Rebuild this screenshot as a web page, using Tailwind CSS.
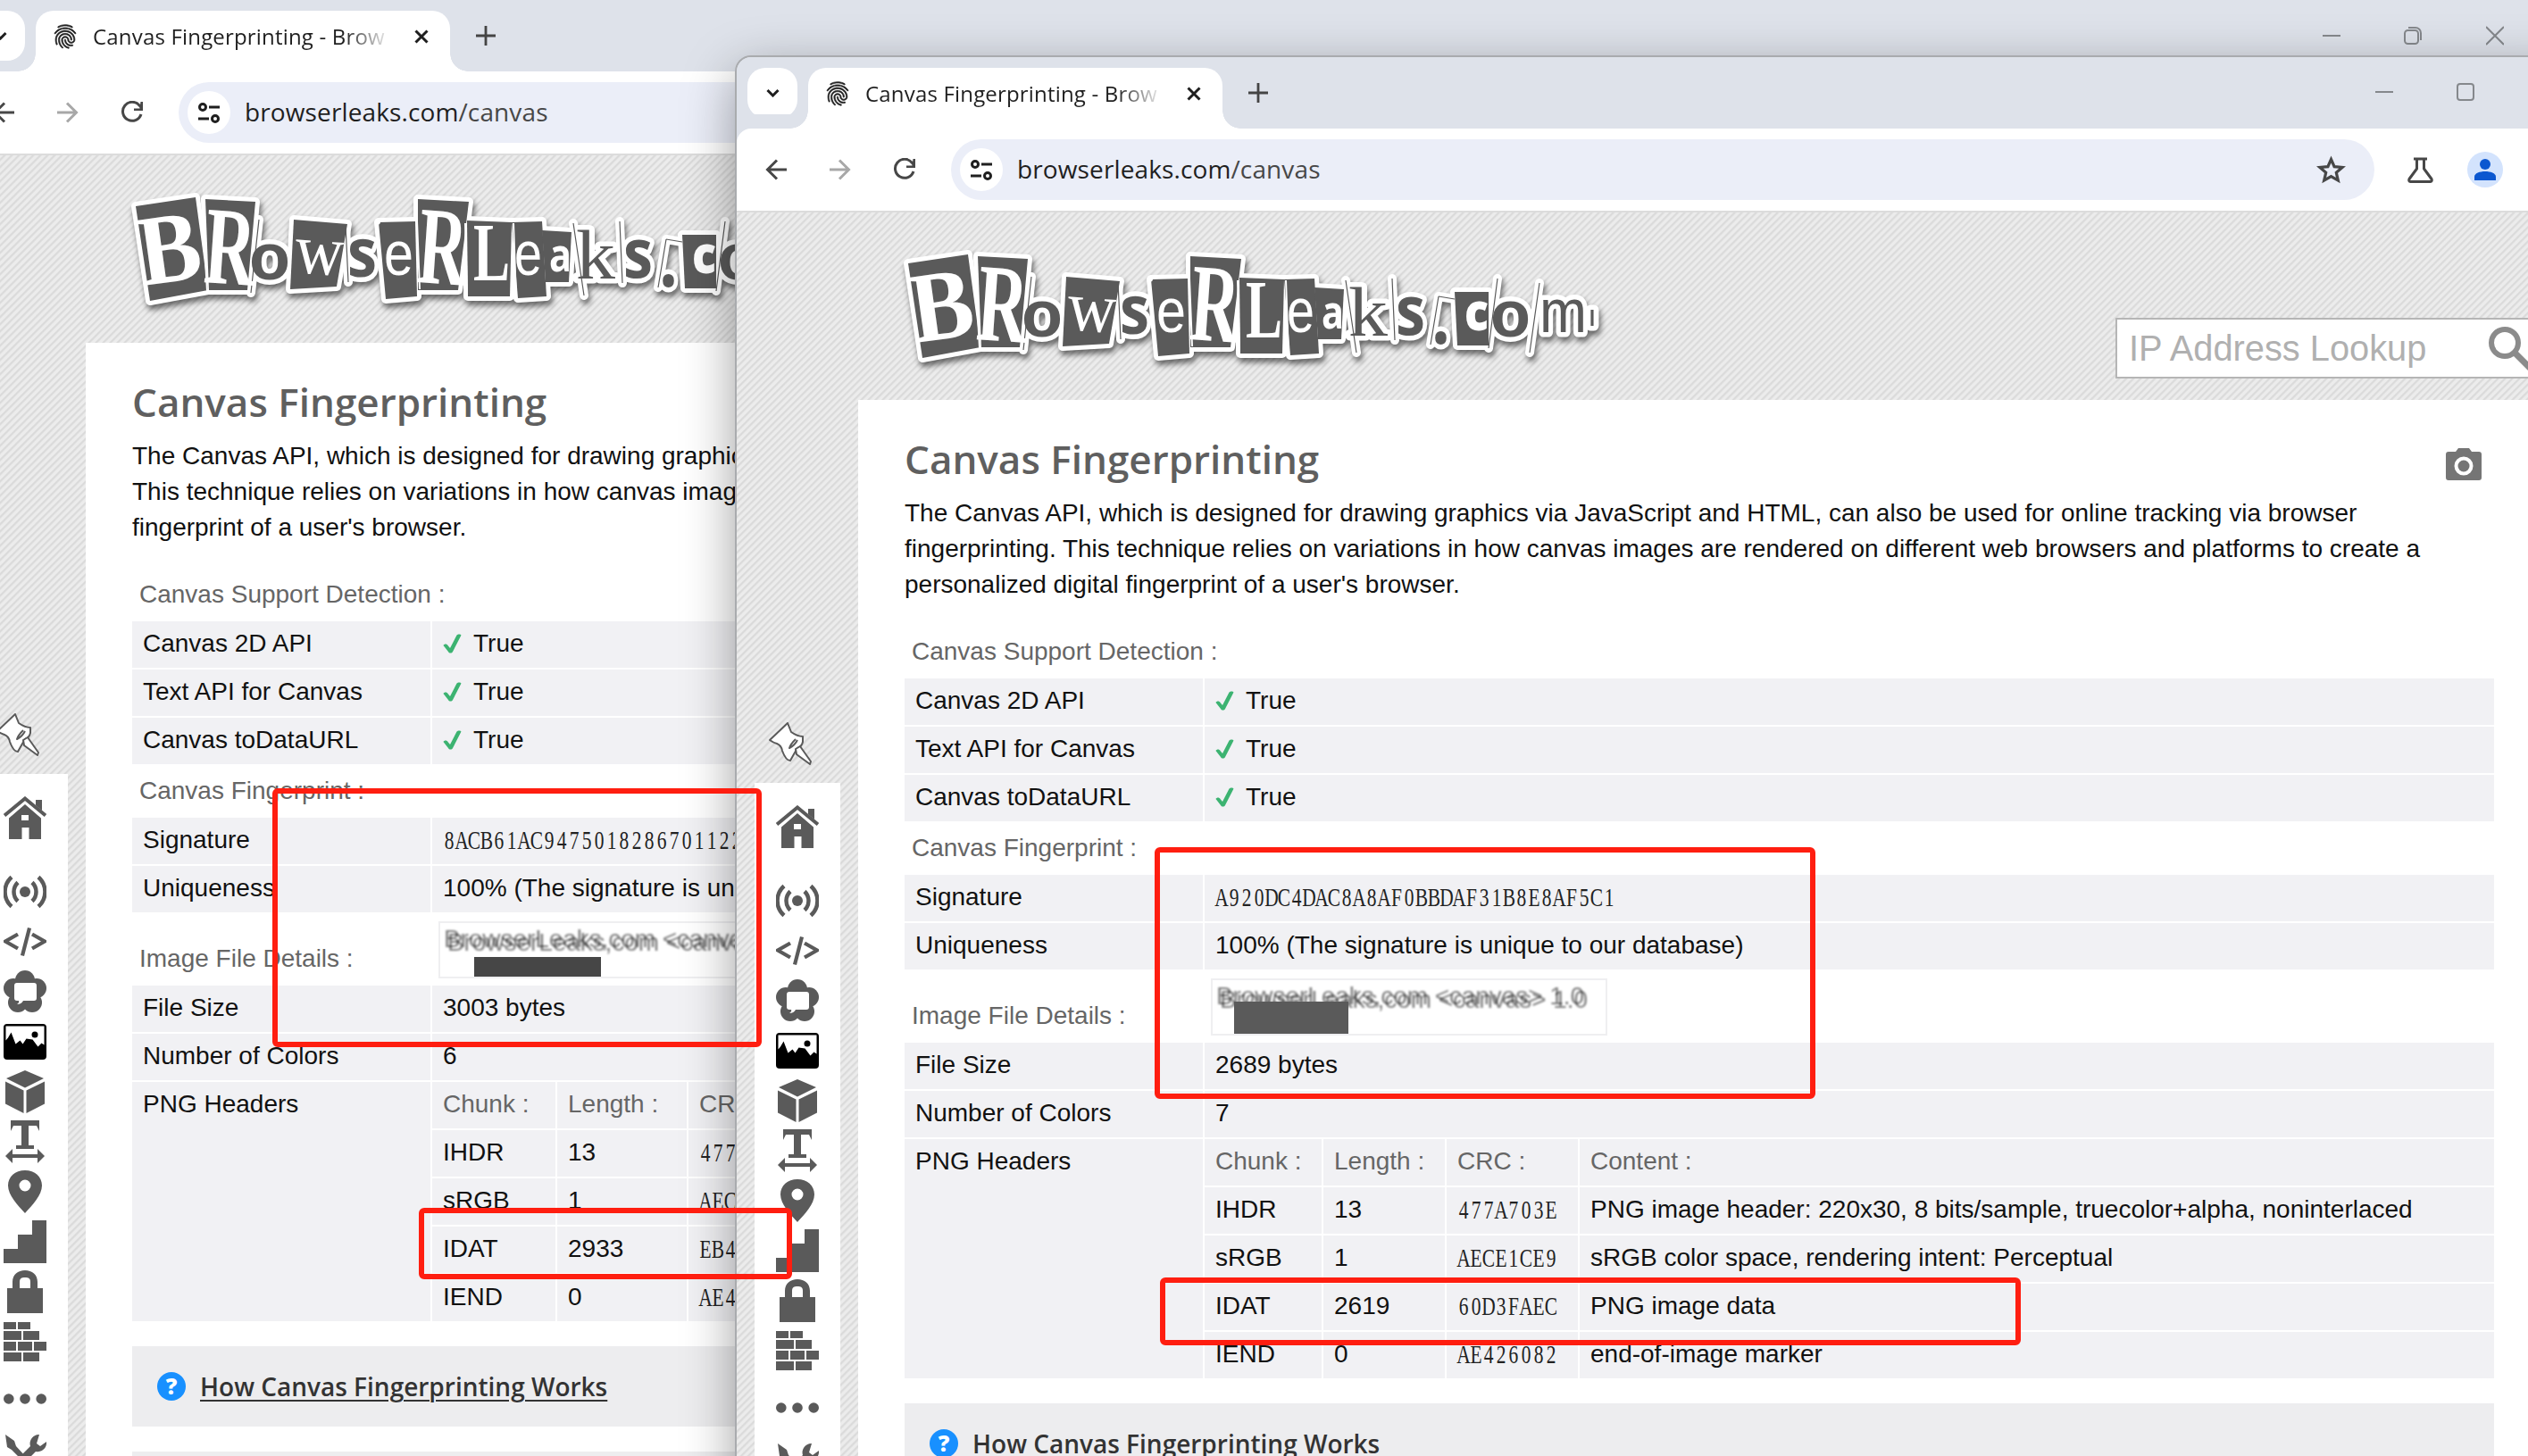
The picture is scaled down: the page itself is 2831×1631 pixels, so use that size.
<!DOCTYPE html>
<html lang="en">
<head>
<meta charset="utf-8">
<title>Canvas Fingerprinting - BrowserLeaks</title>
<script src="https://cdn.jsdelivr.net/npm/@tailwindcss/browser@4"></script>
</head>
<body class="bg-[#dee2ea]">
<div id="desktop" class="relative h-[1631px] w-[2831px] overflow-hidden bg-[#dee2ea] font-['Liberation_Sans',sans-serif] text-[28px] text-[#111]"></div>
<script>
const stroke = 'fill="none" stroke="currentColor" stroke-linecap="butt"';
const icon = (body, cls = 'size-12', vb = '0 0 48 48') => `<svg class="${cls} shrink-0" viewBox="${vb}" fill="currentColor">${body}</svg>`;

const fingerprint = `<path stroke="currentColor" stroke-width=".5" d="M17.81 4.47c-.08 0-.16-.02-.23-.06C15.66 3.42 14 3 12.01 3c-1.98 0-3.86.47-5.57 1.41-.24.13-.54.04-.68-.2-.13-.24-.04-.55.2-.68C7.82 2.52 9.86 2 12.01 2c2.13 0 3.99.47 6.03 1.52.25.13.34.43.21.67-.09.18-.26.28-.44.28zM3.5 9.72c-.1 0-.2-.03-.29-.09-.23-.16-.28-.47-.12-.7.99-1.4 2.25-2.5 3.75-3.27C9.98 4.04 14 4.03 17.15 5.65c1.5.77 2.76 1.86 3.75 3.25.16.22.11.54-.12.7-.23.16-.54.11-.7-.12-.9-1.26-2.04-2.25-3.39-2.94-2.87-1.47-6.54-1.47-9.4.01-1.36.7-2.5 1.7-3.4 2.96-.08.14-.23.21-.39.21zm6.25 12.07c-.13 0-.26-.05-.35-.15-.87-.87-1.34-1.43-2.01-2.64-.69-1.23-1.05-2.73-1.05-4.34 0-2.97 2.54-5.39 5.66-5.39s5.66 2.42 5.66 5.39c0 .28-.22.5-.5.5s-.5-.22-.5-.5c0-2.42-2.09-4.39-4.66-4.39-2.57 0-4.66 1.97-4.66 4.39 0 1.44.32 2.77.93 3.85.64 1.15 1.08 1.64 1.85 2.42.19.2.19.51 0 .71-.11.1-.24.15-.37.15zm7.17-1.85c-1.19 0-2.24-.3-3.1-.89-1.49-1.01-2.38-2.65-2.38-4.39 0-.28.22-.5.5-.5s.5.22.5.5c0 1.41.72 2.74 1.94 3.56.71.48 1.54.71 2.54.71.24 0 .64-.03 1.04-.1.27-.05.53.13.58.41.05.27-.13.53-.41.58-.57.11-1.07.12-1.21.12zM14.91 22c-.04 0-.09-.01-.13-.02-1.59-.44-2.63-1.03-3.72-2.1-1.4-1.39-2.17-3.24-2.17-5.22 0-1.62 1.38-2.94 3.08-2.94 1.7 0 3.08 1.32 3.08 2.94 0 1.07.93 1.94 2.08 1.94s2.08-.87 2.08-1.94c0-3.77-3.25-6.83-7.25-6.83-2.84 0-5.44 1.58-6.61 4.03-.39.81-.59 1.76-.59 2.8 0 .78.07 2.01.67 3.61.1.26-.03.55-.29.64-.26.1-.55-.04-.64-.29-.49-1.31-.73-2.61-.73-3.96 0-1.2.23-2.29.68-3.24 1.33-2.79 4.28-4.6 7.51-4.6 4.55 0 8.25 3.51 8.25 7.83 0 1.62-1.38 2.94-3.08 2.94s-3.08-1.32-3.08-2.94c0-1.07-.93-1.94-2.08-1.94s-2.08.87-2.08 1.94c0 1.71.66 3.31 1.87 4.51.95.94 1.86 1.46 3.27 1.85.27.07.42.35.35.61-.05.23-.26.38-.47.38z"/>`;

const minimize = icon(`<path ${stroke} stroke-width="2" d="M0 11h20"/>`, 'h-[22px] w-5', '0 0 20 22');
const controls = {
  restored: `${minimize}
    ${icon(`<rect x="1" y="2" width="18" height="18" rx="3" ${stroke} stroke-width="2"/>`, 'ml-[71px] h-[22px] w-5', '0 0 20 22')}`,
  maximized: `${minimize}
    ${icon(`<rect x="1" y="5" width="15" height="15" rx="3.5" ${stroke} stroke-width="2"/><path ${stroke} stroke-width="2" d="M5 2h8a6 6 0 0 1 6 6v8"/>`, 'ml-[71px] h-[22px] w-5', '0 0 20 22')}
    ${icon(`<path ${stroke} stroke-width="2" d="M0 1l20 20M20 1L0 21"/>`, 'ml-[72px] h-[22px] w-5', '0 0 20 22')}`
};

const sideIcons = [
  ['', `<path ${stroke} stroke-width="4" d="M1 21.500L24 2.500 47 21.500"/><path d="M36 4h7v12l-7-6z"/><path fill-rule="evenodd" d="M24 9l18 15.500V48H28.500V35h-8V48H6V24.500zM20 21v6h8v-6z"/>`],
  ['mt-[35px]', `<circle cx="24" cy="24" r="6"/><path ${stroke} stroke-width="4.500" d="M16 13.500a14.500 14.500 0 0 0 0 21M9 7.500a22 22 0 0 0 0 33M32 13.500a14.500 14.500 0 0 1 0 21M39 7.500a22 22 0 0 1 0 33"/>`],
  ['mt-2', `<path ${stroke} stroke-width="4.200" d="M16 15.500L2 23.500l14 8M32 15.500l14 8-14 8M29 8.500l-8 31"/>`],
  ['mt-2', `<circle cx="24" cy="11" r="11"/><circle cx="11" cy="20" r="11"/><circle cx="37" cy="20" r="11"/><circle cx="16" cy="36" r="11"/><circle cx="32" cy="36" r="11"/><path fill="#fff" d="M15 14h19q3 0 3 3v14q0 3-3 3H22q-2 4-7 4 3-2 2-4h-2q-3 0-3-3V17q0-3 3-3z"/>`],
  ['mt-2 text-black', `<rect y="4" width="48" height="40" rx="4"/><path fill="#fff" d="M2.500 6.500h43v21l-3-2-4 4-6-8-7-1-4 6-3-4-5 4-5-13-3.500 6-2.500 3z"/><circle cx="35" cy="16" r="3.500"/>`],
  ['mt-2', `<path d="M24 0l21 9-21 10.500L3 9zM2 12.500l20.500 10V48L2 37.500zM46 12.500L25.500 22.500V48L46 37.500z"/>`],
  ['mt-2', `<path d="M8 0h32v12l-3-6h-9v22h6v4H14v-4h6V6h-9l-3 6z"/><path d="M2 40l8-8v6h28v-6l8 8-8 8v-6H10v6z"/>`],
  ['mt-2', `<path fill-rule="evenodd" d="M24 0c11 0 19 7 19 17 0 11-11 22-19 31C16 39 5 28 5 17 5 7 13 0 24 0zm0 10.500a6.500 6.500 0 1 0 0 13 6.500 6.500 0 0 0 0-13z"/>`],
  ['mt-2', `<path d="M0 32h16V16h16V0h16v48H0z"/>`],
  ['mt-2', `<path fill-rule="evenodd" d="M10 20V13C10 5 16 0 24 0s14 5 14 13v7h6v28H4V20zm8 0h12v-7c0-4-2-5-6-5s-6 1-6 5z"/>`],
  ['mt-2', `<path d="M0 2h14v8H0zM16 2h14v8H16zM0 12h20v10H0zM22 12h18v10H22zM0 24h14v10H0zM16 24h16v10H16zM34 24h14v10H34zM0 36h20v10H0zM22 36h18v10H22z"/>`],
  ['mt-4', `<circle cx="5.800" cy="24" r="5.800"/><circle cx="24" cy="24" r="5.800"/><circle cx="42.200" cy="24" r="5.800"/>`],
  ['mt-4', `<path d="M2 0l10 7 2 6 12 13-4 4L9 17l-5-3z"/><path d="M40 0a10 10 0 0 0-10 13L4 39l6 6 26-26A10 10 0 0 0 48 8l-7 5-4-3z"/>`]
];

// Ransom-note wordmark: paper cut-outs with a white edge and a soft drop shadow.
const cards = ['17,25 84,15 98,119 33,131', '95,17 151,20 142,119 99,119', '194,40 254,45 242,115 190,118', '289,43 330,42 332,126 297,129', '333,17 390,20 378,119 333,119', '388,41 438,43 436,126 389,126', '438,43 472,42 477,126 445,128', '472,52 505,54 502,110 476,110', '629,57 667,57 667,117 632,117'];
const slips = 'M155 40L146 122M252 46l3 64M507 44l12 81M559 42l3 69M677 42l-10 78M724 47l-11 78M611 62l-9 54M611 62l18 3';
const loose = [['o', 144, 107, 74, 'Liberation Sans', 700, 46], ['s', 254, 104, 76, 'Open Sans', 700, 33], ['k', 510, 106, 78, 'Liberation Serif', 400, 44], ['s', 563, 105, 77, 'Open Sans', 700, 33], ['.', 603, 115, 90, 'Open Sans', 700, 21], ['o', 669, 107, 74, 'Liberation Sans', 700, 45], ['m', 724, 102, 68, 'Liberation Sans', 400, 53], ['ı', 778, 95, 34, 'Liberation Sans', 400, 10]];
const inset = [['B', 25, 114, 112, 'Liberation Serif', 700, 70, -8], ['R', 92, 110, 124, 'Liberation Serif', 700, 56, 4], ['w', 194, 99, 80, 'Liberation Serif', 400, 54, 4], ['e', 295, 102, 70, 'Liberation Sans', 400, 33, 0], ['R', 331, 110, 124, 'Liberation Serif', 700, 54, 4], ['L', 395, 108, 93, 'Liberation Serif', 700, 41, 0], ['e', 441, 102, 70, 'Liberation Sans', 400, 31, 0], ['a', 480, 98, 52, 'Open Sans', 700, 25, 0], ['c', 640, 100, 58, 'Open Sans', 800, 27, 0]];
const glyph = ([c, x, y, s, f, w, len, rot = 0], extra) => `<text x="${x}" y="${y}" font-size="${s}" font-family="${f}" font-weight="${w}" textLength="${len}" lengthAdjust="spacingAndGlyphs" transform="rotate(${rot} ${x} ${y})" ${extra}>${c}</text>`;
const logo = `<svg class="h-[160px] w-[810px] overflow-visible drop-shadow-[2px_5px_3px_rgba(0,0,0,0.55)]" viewBox="0 0 810 160">
  <g fill="#fff" stroke="#fff" stroke-width="10" stroke-linejoin="round" stroke-linecap="round">
    ${cards.map(p => `<polygon points="${p}"/>`).join('')}<path d="${slips}"/>
    ${loose.map(g => glyph(g, 'stroke-width="11"')).join('')}
  </g>
  <g fill="#5a5a5a">${cards.map(p => `<polygon points="${p}"/>`).join('')}${loose.map(g => glyph(g, '')).join('')}</g>
  <path d="M91 16l6 104M291 41l-2 4M332 42l3 76M386 44l2 82M440 44l3 84" fill="none" stroke="#fff" stroke-width="2"/>
  <path d="${slips}" fill="none" stroke="#5a5a5a" stroke-width="1.200"/>
  <g fill="#fff">${inset.map(g => glyph(g, '')).join('')}</g>
</svg>`;

// Narrow fixed-pitch serif digits: every character is centred in a 14px cell.
const mono = s => `<svg class="h-[28px] overflow-visible" style="width:${s.length * 14}px" fill="#222" font-family="Liberation Serif" font-size="29"><text transform="scale(.74 1)" y="23" text-anchor="middle" x="${[...s].map((_, i) => (i * 14 + 7) / .74).join(' ')}">${s}</text></svg>`;

const check = `<svg class="mr-[13px] h-[22px] w-[21px]" viewBox="0 0 21 22"><path fill="#3cb371" d="M.500 13c1-2 4-2 5 0L8 16 15.500 1.500C16.500 0 20 0 20.500 1.500L11 20c-1 2-4 2-5 0z"/></svg>`;
const cell = 'flex h-[52px] items-center bg-[#f1f1f4] pl-3 pb-[3px] whitespace-nowrap';
const row = (k, v) => `<div class="grid grid-cols-[334px_1fr] gap-x-[2px]"><div class="${cell}">${k}</div><div class="${cell}">${v}</div></div>`;
const label = t => `<div class="flex h-[56px] items-center pl-2 text-[#666]">${t}</div>`;

function browser(w) {
  const chunks = [['IHDR', '13', '477A703E', 'PNG image header: 220x30, 8 bits/sample, truecolor+alpha, noninterlaced'], ['sRGB', '1', 'AECE1CE9', 'sRGB color space, rendering intent: Perceptual'], ['IDAT', w.idat, w.crc, 'PNG image data'], ['IEND', '0', 'AE426082', 'end-of-image marker']];
  return `<section class="${w.frame}">
    <div class="flex h-20 shrink-0 bg-[#dee2ea] pl-3 pt-3 text-[#1f1f1f]">
      <div class="flex size-14 items-center justify-center rounded-[20px] bg-white">${icon(`<path ${stroke} stroke-width="3" d="M1.500 2l6 6 6-6"/>`, 'h-[10px] w-[15px]', '0 0 15 10')}</div>
      <div class="ml-3 flex h-[68px] w-[464px] items-center rounded-t-[20px] bg-white pl-[17px] pb-[10px] relative">
        <div class="absolute -left-5 bottom-0 size-5 bg-[radial-gradient(circle_at_0_0,transparent_19.500px,white_20px)]"></div>
        <div class="absolute -right-5 bottom-0 size-5 bg-[radial-gradient(circle_at_100%_0,transparent_19.500px,white_20px)]"></div>
        ${icon(fingerprint, 'h-8 w-8', '0 0 24 24')}
        <div class="ml-[15px] w-[334px] overflow-hidden whitespace-nowrap bg-[linear-gradient(90deg,#1f1f1f_84%,transparent_100%)] bg-clip-text font-['Open_Sans',sans-serif] text-[24px] leading-[40px] tracking-[0.180px] text-transparent">Canvas Fingerprinting - Brow</div>
        ${icon(`<path ${stroke} stroke-width="3" d="M1.500 1.500l13 13M14.500 1.500l-13 13"/>`, 'ml-[26px] size-4', '0 0 16 16')}
      </div>
      ${icon(`<path ${stroke} stroke-width="2.800" d="M11 0v22M0 11h22"/>`, 'ml-[29px] mt-[17px] size-[22px] text-[#444]', '0 0 22 22')}
      <div class="${w.controlsCls}">${controls[w.controls]}</div>
    </div>
    <div class="flex h-[92px] shrink-0 items-center bg-white pl-8 text-[#474747] ${w.toolbarCls}">
      ${icon(`<path ${stroke} stroke-width="3" d="M13 1.500L2.500 12 13 22.500M2.500 12H24"/>`, 'size-6', '0 0 24 24')}
      ${icon(`<path ${stroke} stroke-width="3" d="M11 1.500L21.500 12 11 22.500M21.500 12H0"/>`, 'ml-12 size-6 text-[#a8a8a8]', '0 0 24 24')}
      ${icon(`<path ${stroke} stroke-width="3" d="M23 15a10.500 10.500 0 1 1-2-10l3 3"/><path d="M25 1v10H15V8.500h6.500L22.500 1z"/>`, 'ml-[47px] h-[26px] w-[26px]', '0 0 26 26')}
      <div class="ml-[39px] flex h-[68px] w-[1594px] shrink-0 items-center rounded-full bg-[#ebeef8] pl-[10px]">
        <div class="flex size-12 items-center justify-center rounded-full bg-white text-[#1f1f1f]">${icon(`<g ${stroke} stroke-width="3"><circle cx="5" cy="5" r="3.500"/><circle cx="19" cy="18" r="3.500"/><path d="M12 5h12M0 18h12"/></g>`, 'h-[23px] w-6', '0 0 24 23')}</div>
        <div class="ml-4 pb-[2px] font-['Open_Sans',sans-serif] text-[28px] tracking-[0.120px] text-[#1f1f1f]">browserleaks.com<span class="text-[#474747]">/canvas</span></div>
        ${icon(`<path ${stroke} stroke-width="3.200" d="M16.500 4.500l3.600 8.200 9 .8-6.800 5.900 2 8.700-7.800-4.600-7.800 4.600 2-8.700-6.800-5.900 9-.8z"/>`, 'ml-auto mr-[32px] size-[33px]', '0 0 33 33')}
      </div>
      ${icon(`<path ${stroke} stroke-width="3" stroke-linejoin="round" d="M7 2h15M10.500 2v11L2 24.500Q1 27 3.500 27.500h22Q28 27 27 24.500L18.500 13V2"/>`, 'ml-[37px] h-[29px] w-[29px]', '0 0 29 29')}
      <div class="ml-[38px] flex size-10 shrink-0 items-center justify-center rounded-full bg-[#d3e3fd] text-[#0b57d0]">${icon(`<circle cx="12" cy="6" r="6"/><path d="M0 24v-4c0-4 6-6 12-6s12 2 12 6v4z"/>`, 'size-6', '0 0 24 24')}</div>
    </div>
    <div class="h-[2px] shrink-0 bg-[#dcdcdc]"></div>
    <div class="flex grow flex-col bg-[#e5e5e5] bg-[repeating-linear-gradient(135deg,#ececec_0_2px,#dadada_3.200px,#dadada_4px,#ececec_5.660px)]">
      <header class="flex h-[210px] shrink-0 items-start pl-[175px] pt-[32px]">
        ${logo}
        <div class="ml-auto mt-[86px] flex h-[68px] w-[520px] items-center border-2 border-[#b5b5b5] bg-white pl-[13px] text-[39.800px] text-[#b0b0b0]">
          <span class="whitespace-nowrap pt-[2px]">IP Address Lookup</span>
          ${icon(`<circle cx="18" cy="18" r="15" ${stroke} stroke-width="6"/><path ${stroke} stroke-width="7" d="M30 30l22 22"/>`, 'ml-[70px] mt-[4px] size-[52px] text-[#8b8b8b]', '0 0 52 52')}
        </div>
      </header>
      <main class="ml-[136px] flex grow flex-col bg-white pl-[52px] pt-[33px]">
        <div class="flex h-[67px] w-[1766px] items-center justify-between">
          <h1 class="font-['Open_Sans',sans-serif] text-[44px] font-semibold leading-[67px] text-[#5f5f5f]">Canvas Fingerprinting</h1>
          ${icon(`<path fill-rule="evenodd" d="M3 4h8l3-4h12l3 4h8q3 0 3 3v26q0 3-3 3H3q-3 0-3-3V7q0-3 3-3zm17 5.500a10.500 10.500 0 1 0 0 21 10.500 10.500 0 0 0 0-21z"/><circle cx="20" cy="20" r="6.500"/>`, 'mt-[11px] h-9 w-10 text-[#757575]', '0 0 40 36')}
        </div>
        <p class="mt-[7px] whitespace-nowrap leading-[40px]">${w.intro}</p>
        <div class="mt-[27px] flex w-[1780px] flex-col gap-[2px]">
          ${label('Canvas Support Detection :')}
          ${['Canvas 2D API', 'Text API for Canvas', 'Canvas toDataURL'].map(k => row(k, check + 'True')).join('')}
          ${label('Canvas Fingerprint :')}
          ${row('Signature', `<div class="mt-[3px]">${mono(w.signature)}</div>`)}
          ${row('Uniqueness', '100% (The signature is unique to our database)')}
          <div class="grid h-[78px] grid-cols-[343px_444px] items-center">
            <div class="pl-2 pt-[22px] leading-[32px] text-[#666]">Image File Details :</div>
            <div class="mt-px h-16 border-2 border-[#efeff1] bg-white">
              <svg class="block h-[60px] w-[440px]" viewBox="0 0 440 60" font-family="Liberation Sans" font-size="28">
                <g class="blur-[1px]"><text x="4" y="27" textLength="412" fill="#000" fill-opacity=".5">BrowserLeaks,com &lt;canvas&gt; 1.0</text><text x="8" y="31" textLength="412" fill="#000" fill-opacity=".5">BrowserLeaks,com &lt;canvas&gt; 1.0</text></g>
                ${w.patch}
              </svg>
            </div>
          </div>
          ${row('File Size', w.size)}
          ${row('Number of Colors', w.colors)}
          <div class="grid grid-cols-[334px_1fr] gap-x-[2px]">
            <div class="flex h-[268px] items-start bg-[#f1f1f4] pl-3 pt-[9px] leading-[32px]">PNG Headers</div>
            <div class="${w.gridCls}">
              ${['Chunk :', 'Length :', 'CRC :', 'Content :'].map(t => `<div class="${cell} text-[#666]">${t}</div>`).join('')}
              ${chunks.map(([a, b, c, d]) => `<div class="${cell}">${a}</div><div class="${cell}">${b}</div><div class="${cell}"><div class="mt-[3px]">${mono(c)}</div></div><div class="${cell}">${d}</div>`).join('')}
            </div>
          </div>
        </div>
        <div class="mt-7 flex h-[90px] w-[1780px] shrink-0 items-center bg-[#ededef] pl-[28px]">
          <div class="flex size-8 items-center justify-center rounded-full bg-[#1890ff] font-['Open_Sans',sans-serif] text-[25px] font-extrabold text-white">?</div>
          <span class="ml-[16px] font-['Open_Sans',sans-serif] text-[28px] font-semibold text-[#333] underline decoration-2 underline-offset-4">How Canvas Fingerprinting Works</span>
        </div>
        <div class="mt-7 h-[90px] w-[1780px] shrink-0 bg-[#ededef]"></div>
      </main>
    </div>
    <nav class="absolute left-5 ${w.sideTop} flex w-24 flex-col items-center text-[#5a5a5a]">
      <svg class="mb-[20px] mr-[16px] size-[48px]" viewBox="-1 -1 48 48" fill="#fff" stroke="#5a5a5a" stroke-width="2" stroke-linejoin="round"><path d="M0 19L20 0l4 10q7 5 13 5v6q-1 5-6 7-3 5-8 14-5 0-9-11-1-6-6-8-4-1-8-4z"/><path fill="none" d="M29 18q-6 6-7 10 6-3 9-9"/><path d="M29 29l5-3 12 17-1 3-15-11z"/></svg>
      <div class="flex w-24 flex-col items-center bg-white pt-[25px]">${sideIcons.map(([c, b]) => icon(b, `size-12 ${c}`)).join('')}</div>
    </nav>
  </section>`;
}

const marks = ['left-[305px] top-[883px] h-[290px] w-[548px]', 'left-[469px] top-[1353px] h-[80px] w-[418px]', 'left-[1293px] top-[949px] h-[282px] w-[740px]', 'left-[1299px] top-[1431px] h-[76px] w-[964px]'];

document.getElementById('desktop').innerHTML =
  browser({
    frame: 'absolute -left-10 top-0 flex h-[1700px] w-[2890px] flex-col overflow-hidden',
    toolbarCls: '', controls: 'maximized', controlsCls: 'ml-auto mr-[46px] mt-[17px] flex text-[#85888c]',
    idat: '2933', crc: 'EB4A1F07', signature: '8ACB61AC9475018286701122', size: '3003 bytes', colors: '6',
    intro: "The Canvas API, which is designed for drawing graphics via JavaScript and HTML, can also be used<br>This technique relies on variations in how canvas images are rendered on different web browsers<br>fingerprint of a user's browser.",
    patch: '<rect x="38" y="38" width="142" height="22" fill="#464646"/>',
    gridCls: 'grid grid-cols-[138px_145px_150px_1fr] gap-x-[2px] gap-y-[2px]', sideTop: 'top-[799px]'
  }) +
  browser({
    frame: 'absolute left-[825px] top-[64px] flex h-[1700px] w-[2064px] flex-col overflow-hidden rounded-tl-[16px] shadow-[0_0_0_2px_#a9abae,0_18px_60px_rgba(0,0,0,0.4)]',
    toolbarCls: 'rounded-tl-[16px] shadow-[-16px_-16px_0_0_#dee2ea]', controls: 'restored', controlsCls: 'ml-auto mr-[118px] mt-[16px] flex text-[#85888c]',
    idat: '2619', crc: '60D3FAEC', signature: 'A920DC4DAC8A8AF0BBDAF31B8E8AF5C1', size: '2689 bytes', colors: '7',
    intro: "The Canvas API, which is designed for drawing graphics via JavaScript and HTML, can also be used for online tracking via browser<br>fingerprinting. This technique relies on variations in how canvas images are rendered on different web browsers and platforms to create a<br>personalized digital fingerprint of a user's browser.",
    patch: '<rect x="24" y="24" width="128" height="36" fill="#5a5a5a"/>',
    gridCls: 'grid grid-cols-[131px_136px_147px_1fr] gap-x-[2px] gap-y-[2px]', sideTop: 'top-[745px]'
  }) +
  marks.map(m => `<div class="absolute ${m} rounded-[6px] border-[6px] border-[#ff1e10]"></div>`).join('');
</script>
</body>
</html>
